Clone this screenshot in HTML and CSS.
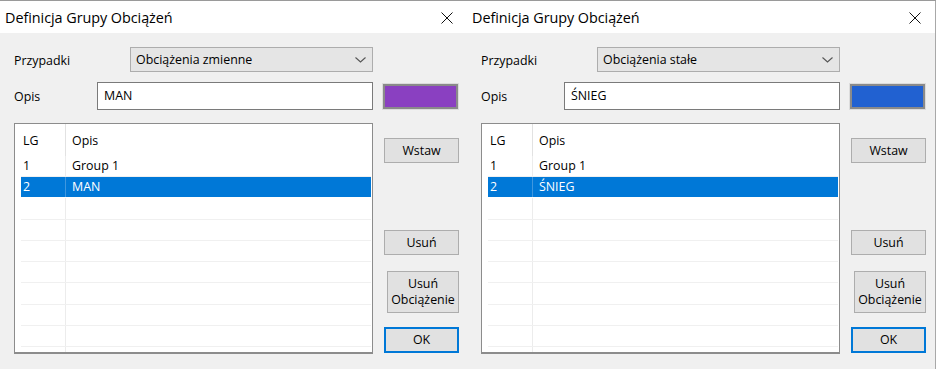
FILE: index.html
```html
<!DOCTYPE html>
<html lang="pl">
<head>
  <meta charset="UTF-8" />
  <title>Definicja Grupy Obciążeń</title>
  <link rel="stylesheet" href="styles.css">
</head>
<body>
  <div class="desk">

    <section class="dlg">
      <div class="titlebar">
        <span class="title">Definicja Grupy Obciążeń</span>
        <svg class="close" width="12" height="12" viewBox="0 0 12 12"><path d="M0.5 0.5 L11.5 11.5 M11.5 0.5 L0.5 11.5" stroke="#111" stroke-width="1" fill="none"/></svg>
      </div>
      <div class="dlg-body">
        <div class="row row-case">
          <span class="lbl lbl-case">Przypadki</span>
          <div class="combo">
            <span>Obciążenia zmienne</span>
            <svg class="chev" width="11" height="6" viewBox="0 0 11 6"><path d="M0.5 0.5 L5.5 5 L10.5 0.5" stroke="#555" stroke-width="1.1" fill="none"/></svg>
          </div>
        </div>
        <div class="row row-desc">
          <span class="lbl lbl-desc">Opis</span>
          <div class="textbox">MAN</div>
          <div class="swatch swatch-purple"></div>
        </div>
        <div class="main">
          <div class="grid">
            <div class="grow ghead"><span class="c1">LG</span><span class="c2">Opis</span></div>
            <div class="grow"><span class="c1">1</span><span class="c2">Group 1</span></div>
            <div class="grow sel"><span class="c1">2</span><span class="c2">MAN</span></div>
            <div class="grow"><span class="c1"></span><span class="c2"></span></div>
            <div class="grow"><span class="c1"></span><span class="c2"></span></div>
            <div class="grow"><span class="c1"></span><span class="c2"></span></div>
            <div class="grow"><span class="c1"></span><span class="c2"></span></div>
            <div class="grow"><span class="c1"></span><span class="c2"></span></div>
            <div class="grow"><span class="c1"></span><span class="c2"></span></div>
            <div class="grow"><span class="c1"></span><span class="c2"></span></div>
            <div class="grow last"><span class="c1"></span><span class="c2"></span></div>
          </div>
          <div class="btns">
            <button class="btn btn-insert">Wstaw</button>
            <button class="btn btn-del">Usuń</button>
            <button class="btn btn-delload">Usuń<br>Obciążenie</button>
            <button class="btn btn-ok">OK</button>
          </div>
        </div>
      </div>
    </section>

    <section class="dlg dlg-right">
      <div class="titlebar">
        <span class="title">Definicja Grupy Obciążeń</span>
        <svg class="close" width="12" height="12" viewBox="0 0 12 12"><path d="M0.5 0.5 L11.5 11.5 M11.5 0.5 L0.5 11.5" stroke="#111" stroke-width="1" fill="none"/></svg>
      </div>
      <div class="dlg-body">
        <div class="row row-case">
          <span class="lbl lbl-case">Przypadki</span>
          <div class="combo">
            <span>Obciążenia stałe</span>
            <svg class="chev" width="11" height="6" viewBox="0 0 11 6"><path d="M0.5 0.5 L5.5 5 L10.5 0.5" stroke="#555" stroke-width="1.1" fill="none"/></svg>
          </div>
        </div>
        <div class="row row-desc">
          <span class="lbl lbl-desc">Opis</span>
          <div class="textbox">ŚNIEG</div>
          <div class="swatch swatch-blue"></div>
        </div>
        <div class="main">
          <div class="grid">
            <div class="grow ghead"><span class="c1">LG</span><span class="c2">Opis</span></div>
            <div class="grow"><span class="c1">1</span><span class="c2">Group 1</span></div>
            <div class="grow sel"><span class="c1">2</span><span class="c2">ŚNIEG</span></div>
            <div class="grow"><span class="c1"></span><span class="c2"></span></div>
            <div class="grow"><span class="c1"></span><span class="c2"></span></div>
            <div class="grow"><span class="c1"></span><span class="c2"></span></div>
            <div class="grow"><span class="c1"></span><span class="c2"></span></div>
            <div class="grow"><span class="c1"></span><span class="c2"></span></div>
            <div class="grow"><span class="c1"></span><span class="c2"></span></div>
            <div class="grow"><span class="c1"></span><span class="c2"></span></div>
            <div class="grow last"><span class="c1"></span><span class="c2"></span></div>
          </div>
          <div class="btns">
            <button class="btn btn-insert">Wstaw</button>
            <button class="btn btn-del">Usuń</button>
            <button class="btn btn-delload">Usuń<br>Obciążenie</button>
            <button class="btn btn-ok">OK</button>
          </div>
        </div>
      </div>
    </section>

  </div>
</body>
</html>
```

FILE: styles.css
```css
body {
  margin: 0;
  font-family: "Segoe UI", "Open Sans", Arial, sans-serif;
  font-size: 12.4px;
  color: #000;
  background: #f0f0f0;
}

.desk {
  display: flex;
  width: 936px;
  height: 369px;
  overflow: hidden;
  border-top: 1px solid #9a9a9a;
  box-sizing: border-box;
}

.dlg {
  width: 467px;
  flex: none;
  background: #f0f0f0;
}

.dlg-right {
  width: 468px;
  border-right: 1px solid #a8a8a8;
}

.titlebar {
  height: 32px;
  background: #fff;
  display: flex;
  align-items: center;
  justify-content: space-between;
  padding: 0 14px 0 5px;
}

.title {
  font-size: 14.4px;
  letter-spacing: -0.05px;
}

.close {
  display: block;
  margin-top: 1px;
}

.dlg-body {
  padding: 14px 0 0 14px;
}

.row {
  display: flex;
  align-items: center;
}

.row-desc {
  margin-top: 10px;
}

.lbl {
  padding-top: 1px;
}

.lbl-case {
  width: 116px;
}

.lbl-desc {
  width: 83px;
}

.combo {
  width: 243px;
  height: 25px;
  box-sizing: border-box;
  border: 1px solid #adadad;
  background: #e5e5e5;
  display: flex;
  align-items: center;
  justify-content: space-between;
  padding: 0 6px 0 5px;
}

.textbox {
  width: 276px;
  height: 28px;
  box-sizing: border-box;
  border: 1px solid #7a7a7a;
  background: #fff;
  padding: 0 6px;
  line-height: 26px;
}

.swatch {
  width: 75px;
  height: 25px;
  box-sizing: border-box;
  margin-left: 10px;
  border: 2px solid #8a8a8a;
  box-shadow: 0 0 0 1px #dcdcdc;
}

.swatch-purple {
  background: #8a40c1;
}

.swatch-blue {
  background: #2161d1;
}

.main {
  display: flex;
  margin-top: 13px;
}

.grid {
  width: 359px;
  height: 231px;
  box-sizing: border-box;
  border: 1px solid #8c8c8c;
  border-bottom-width: 2px;
  background: #fff;
  padding-left: 6px;
  overflow: hidden;
}

.grow {
  display: flex;
  height: 20.3px;
  line-height: 20px;
  border-bottom: 1px solid #f0f0f0;
  margin-right: 1px;
}

.grow.last {
  border-bottom: none;
}

.ghead {
  height: 32px;
  line-height: 34px;
  border-bottom: none;
}

.c1 {
  width: 45px;
  padding-left: 2px;
  box-sizing: border-box;
  border-right: 1px solid #ececec;
}

.ghead .c1 {
  border-right-color: #e2e2e2;
}

.c2 {
  padding-left: 6px;
}

.sel {
  height: 20px;
  background: #0078d7;
  color: #fff;
  border-bottom-color: #fff;
}

.sel .c1 {
  border-right-color: #3f97df;
}

.btns {
  display: flex;
  flex-direction: column;
  align-items: flex-end;
  width: 86px;
  padding-top: 15px;
}

.btn {
  font: inherit;
  color: #000;
  width: 75px;
  height: 25px;
  padding: 0;
  background: #e1e1e1;
  border: 1px solid #adadad;
  box-sizing: border-box;
  line-height: 14px;
}

.btn-del {
  margin-top: 67px;
}

.btn-delload {
  width: 72px;
  height: 42px;
  margin-top: 16px;
  line-height: 16px;
}

.btn-ok {
  height: 26px;
  margin-top: 14px;
  border: 2px solid #0078d7;
}
```
